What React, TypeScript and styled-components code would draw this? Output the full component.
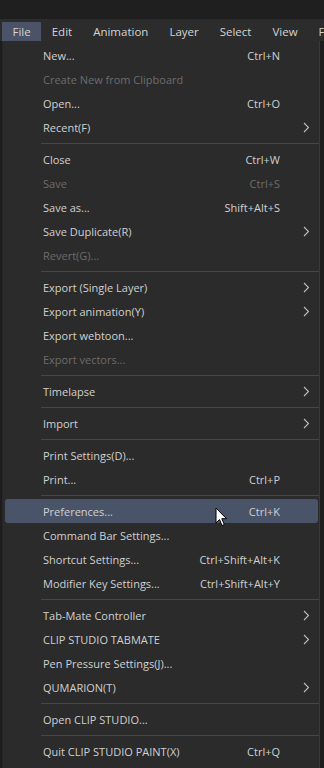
import styled, { createGlobalStyle } from 'styled-components';

const GlobalStyle = createGlobalStyle`
  html, body {
    margin: 0;
    padding: 0;
    background: #1d1d1d;
    font-family: "Open Sans", "Noto Sans", sans-serif;
  }
`;

const Screen = styled.div`
  width: 324px;
  height: 768px;
  overflow: hidden;
  display: flex;
  flex-direction: column;
  background: #1d1d1d;
  position: relative;
`;

const TitleStrip = styled.div`
  height: 19px;
  background: #1f1f1f;
`;

const MenuBar = styled.div`
  height: 22px;
  background: #2c2c2c;
  display: flex;
  align-items: center;
  padding-left: 2px;
  overflow: hidden;
`;

const BarItem = styled.div<{ $active?: boolean }>`
  height: 19px;
  margin-top: 2px;
  display: flex;
  align-items: center;
  padding: 0 10.5px;
  font-size: 11.5px;
  color: #d4d4d4;
  background: ${(p) => (p.$active ? '#4a5367' : 'transparent')};
  white-space: nowrap;
  flex-shrink: 0;
`;

const Panel = styled.div`
  margin-left: 2px;
  width: 318px;
  flex: 1;
  background: #2b2b2b;
  border-right: 1px solid #3a3a3a;
  border-left: 1px solid #262626;
  box-sizing: border-box;
  padding: 2px 0 0 0;
  display: flex;
  flex-direction: column;
`;

const Row = styled.div<{ $disabled?: boolean; $hover?: boolean }>`
  height: 24px;
  flex-shrink: 0;
  display: flex;
  align-items: center;
  margin: 0 1px 0 2px;
  padding-left: 38px;
  border-radius: 3px;
  font-size: 11px;
  color: ${(p) => (p.$disabled ? '#6c6c6c' : '#d0d0d0')};
  background: ${(p) => (p.$hover ? '#4a5468' : 'transparent')};
  white-space: nowrap;
`;

const Label = styled.span`
  flex: 1;
`;

const Shortcut = styled.span`
  width: 90px;
  text-align: right;
  margin-right: 20px;
`;

const Arrow = styled.span`
  width: 12px;
  margin-right: 6px;
  display: flex;
  justify-content: center;
`;

const Separator = styled.div`
  height: 8px;
  flex-shrink: 0;
  display: flex;
  align-items: center;
  padding-left: 38px;
  &::after {
    content: '';
    flex: 1;
    height: 1px;
    background: #474747;
  }
`;

const Cursor = styled.svg`
  position: absolute;
  left: 215px;
  top: 507px;
`;

type Item =
  | { sep: true }
  | { sep?: false; label: string; key?: string; sub?: boolean; off?: boolean; hover?: boolean };

const items: Item[] = [
  { label: 'New...', key: 'Ctrl+N' },
  { label: 'Create New from Clipboard', off: true },
  { label: 'Open...', key: 'Ctrl+O' },
  { label: 'Recent(F)', sub: true },
  { sep: true },
  { label: 'Close', key: 'Ctrl+W' },
  { label: 'Save', key: 'Ctrl+S', off: true },
  { label: 'Save as...', key: 'Shift+Alt+S' },
  { label: 'Save Duplicate(R)', sub: true },
  { label: 'Revert(G)...', off: true },
  { sep: true },
  { label: 'Export (Single Layer)', sub: true },
  { label: 'Export animation(Y)', sub: true },
  { label: 'Export webtoon...' },
  { label: 'Export vectors...', off: true },
  { sep: true },
  { label: 'Timelapse', sub: true },
  { sep: true },
  { label: 'Import', sub: true },
  { sep: true },
  { label: 'Print Settings(D)...' },
  { label: 'Print...', key: 'Ctrl+P' },
  { sep: true },
  { label: 'Preferences...', key: 'Ctrl+K', hover: true },
  { label: 'Command Bar Settings...' },
  { label: 'Shortcut Settings...', key: 'Ctrl+Shift+Alt+K' },
  { label: 'Modifier Key Settings...', key: 'Ctrl+Shift+Alt+Y' },
  { sep: true },
  { label: 'Tab-Mate Controller', sub: true },
  { label: 'CLIP STUDIO TABMATE', sub: true },
  { label: 'Pen Pressure Settings(J)...' },
  { label: 'QUMARION(T)', sub: true },
  { sep: true },
  { label: 'Open CLIP STUDIO...' },
  { sep: true },
  { label: 'Quit CLIP STUDIO PAINT(X)', key: 'Ctrl+Q' },
];

function Chevron() {
  return (
    <svg width="7" height="11" viewBox="0 0 7 11">
      <path d="M1 1 L5.5 5.5 L1 10" fill="none" stroke="#bdbdbd" strokeWidth="1.1" />
    </svg>
  );
}

export default function App() {
  return (
    <Screen>
      <GlobalStyle />
      <TitleStrip />
      <MenuBar>
        <BarItem $active>File</BarItem>
        <BarItem>Edit</BarItem>
        <BarItem>Animation</BarItem>
        <BarItem>Layer</BarItem>
        <BarItem>Select</BarItem>
        <BarItem>View</BarItem>
        <BarItem>Filter</BarItem>
      </MenuBar>
      <Panel>
        {items.map((it, i) =>
          it.sep ? (
            <Separator key={i} />
          ) : (
            <Row key={i} $disabled={it.off} $hover={it.hover}>
              <Label>{it.label}</Label>
              <Shortcut>{it.key}</Shortcut>
              <Arrow>{it.sub && <Chevron />}</Arrow>
            </Row>
          )
        )}
      </Panel>
      <Cursor width="14" height="20" viewBox="0 0 14 20">
        <path
          d="M1 1 L1 16 L4.5 12.5 L7 18.5 L9.3 17.5 L6.8 11.7 L11.5 11.7 Z"
          fill="#ffffff"
          stroke="#000000"
          strokeWidth="1"
          strokeLinejoin="round"
        />
      </Cursor>
    </Screen>
  );
}
